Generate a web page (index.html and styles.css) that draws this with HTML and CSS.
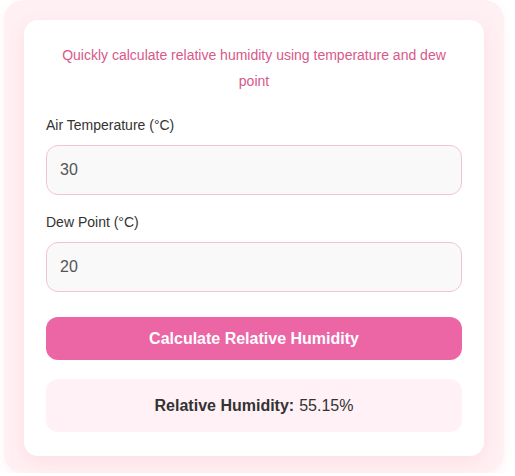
FILE: index.html
```html
<!DOCTYPE html>
<html lang="en">
<head>
<meta charset="utf-8">
<title>Relative Humidity Calculator</title>
<link rel="stylesheet" href="styles.css">
</head>
<body>
<div class="outer">
  <div class="card">
    <p class="intro">Quickly calculate relative humidity using temperature and dew point</p>
    <div class="group">
      <label class="label" for="t">Air Temperature (°C)</label>
      <input class="input" id="t" type="text" value="30">
    </div>
    <div class="group">
      <label class="label" for="d">Dew Point (°C)</label>
      <input class="input" id="d" type="text" value="20">
    </div>
    <button class="btn">Calculate Relative Humidity</button>
    <div class="result"><strong>Relative Humidity:</strong> 55.15%</div>
  </div>
</div>
</body>
</html>
```

FILE: styles.css
```css
html, body {
  margin: 0;
  padding: 0;
  background: #ffffff;
}
body {
  padding: 0 4px;
  font-family: "Liberation Sans", Arial, sans-serif;
  color: #333;
}
.outer {
  width: 500px;
  box-sizing: border-box;
  padding: 20px 20px 17px;
  background: #fff0f3;
  border-radius: 20px;
  box-shadow: 0 4px 10px rgba(240, 150, 180, 0.12);
}
.card {
  background: #ffffff;
  border-radius: 14px;
  padding: 22px 22px 24px;
  box-shadow: 0 6px 18px rgba(236, 120, 160, 0.14);
}
.intro {
  margin: 0 0 21px;
  text-align: center;
  color: #d8588a;
  font-size: 14px;
  line-height: 26px;
  padding: 0 8px;
}
.group {
  display: flex;
  flex-direction: column;
  gap: 10px;
  margin-bottom: 17px;
}
.group + .group {
  margin-bottom: 25px;
}
.label {
  font-size: 14px;
  line-height: 20px;
  color: #333;
}
.input {
  height: 50px;
  box-sizing: border-box;
  border: 1px solid #f2c4d3;
  border-radius: 12px;
  background: #f9f9f9;
  padding: 0 13px;
  font-family: "Liberation Sans", Arial, sans-serif;
  font-size: 16px;
  color: #555;
  width: 100%;
  outline: none;
}
.btn {
  display: block;
  width: 100%;
  height: 43px;
  border: none;
  border-radius: 12px;
  background: #ec66a6;
  color: #ffffff;
  font-family: "Liberation Sans", Arial, sans-serif;
  font-weight: bold;
  font-size: 16px;
  margin-bottom: 19px;
}
.result {
  background: #fff1f5;
  border-radius: 12px;
  height: 53px;
  display: flex;
  align-items: center;
  justify-content: center;
  font-size: 16px;
  color: #333;
}
.result strong {
  margin-right: 5px;
}
```
